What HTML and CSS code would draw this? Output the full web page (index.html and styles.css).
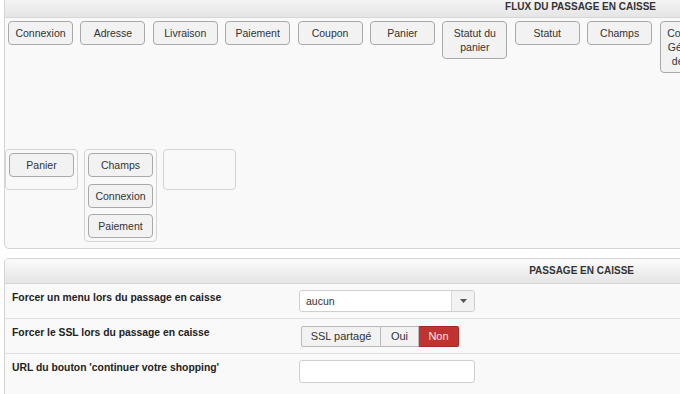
FILE: index.html
```html
<!DOCTYPE html>
<html lang="fr">
<head>
<meta charset="utf-8">
<title>Passage en caisse</title>
<link rel="stylesheet" href="styles.css">
</head>
<body>
<div class="page">
  <section class="panel panel-flow">
    <div class="panel-head head-flow">FLUX DU PASSAGE EN CAISSE</div>
    <div class="steps">
      <div class="btn">Connexion</div>
      <div class="btn">Adresse</div>
      <div class="btn">Livraison</div>
      <div class="btn">Paiement</div>
      <div class="btn">Coupon</div>
      <div class="btn">Panier</div>
      <div class="btn">Statut du panier</div>
      <div class="btn">Statut</div>
      <div class="btn">Champs</div>
      <div class="btn">Conditions Générales de vente</div>
    </div>
    <div class="groups">
      <div class="group"><div class="btn">Panier</div></div>
      <div class="group">
        <div class="btn">Champs</div>
        <div class="btn">Connexion</div>
        <div class="btn">Paiement</div>
      </div>
      <div class="group"></div>
    </div>
  </section>

  <section class="panel panel-form">
    <div class="panel-head head-form">PASSAGE EN CAISSE</div>
    <div class="row">
      <div class="label">Forcer un menu lors du passage en caisse</div>
      <div class="field">
        <div class="select">
          <span class="select-value">aucun</span>
          <span class="select-arrow"><svg width="7" height="4" viewBox="0 0 7 4"><path d="M0 0h7L3.5 4z" fill="#555"/></svg></span>
        </div>
      </div>
    </div>
    <div class="row">
      <div class="label">Forcer le SSL lors du passage en caisse</div>
      <div class="field">
        <div class="toggle">
          <span class="opt">SSL partagé</span>
          <span class="opt">Oui</span>
          <span class="opt opt-active">Non</span>
        </div>
      </div>
    </div>
    <div class="row">
      <div class="label">URL du bouton 'continuer votre shopping'</div>
      <div class="field">
        <div class="input"></div>
      </div>
    </div>
  </section>
</div>
</body>
</html>
```
FILE: styles.css
```css
html, body {
  margin: 0;
  padding: 0;
  background: #ffffff;
  overflow: hidden;
  width: 680px;
  height: 394px;
}
body {
  font-family: "Liberation Sans", Arial, sans-serif;
  font-size: 11px;
  color: #333;
}
.page {
  width: 760px;
  padding-left: 4px;
}
.panel {
  width: 740px;
  background: #f9f9f9;
  border: 1px solid #d4d4d4;
  border-radius: 5px;
  box-sizing: border-box;
}
.panel-flow {
  margin-top: -9px;
  border-top-left-radius: 0;
  border-top-right-radius: 0;
}
.panel-form {
  margin-top: 9px;
}
.panel-head {
  background: linear-gradient(#fbfbfb, #e5e5e5);
  border-bottom: 1px solid #d6d6d6;
  font-weight: bold;
  font-size: 10px;
  text-align: right;
  color: #333;
  box-sizing: border-box;
}
.head-flow {
  height: 26px;
  padding-top: 8px;
  line-height: 14px;
  padding-right: 87px;
  border-radius: 0;
}
.head-form {
  height: 25px;
  line-height: 24px;
  padding-right: 109px;
  border-radius: 4px 4px 0 0;
}
.steps {
  display: flex;
  align-items: flex-start;
  gap: 7.4px;
  padding: 3px 3px 0 3px;
  height: 128px;
}
.btn {
  width: 65px;
  flex: none;
  box-sizing: border-box;
  border: 1px solid #a9a9a9;
  border-radius: 4px;
  background: #f2f2f2;
  text-align: center;
  padding: 4px 2px;
  line-height: 14px;
  font-size: 10.5px;
  color: #333;
}
.groups {
  display: flex;
  align-items: flex-start;
  gap: 6px;
  padding: 0 0 6px 0;
}
.group {
  width: 73px;
  min-height: 41px;
  box-sizing: border-box;
  border: 1px solid #d4d4d4;
  border-radius: 4px;
  padding: 3px 3px 0 3px;
  display: flex;
  flex-direction: column;
  gap: 6.5px;
}
.group .btn:last-child {
  margin-bottom: 3px;
}
.row {
  display: flex;
  align-items: flex-start;
  height: 35px;
  box-sizing: border-box;
  border-bottom: 1px solid #e2e2e2;
}
.row:last-child {
  border-bottom: none;
  height: 45px;
}
.label {
  width: 287px;
  padding-left: 7px;
  padding-top: 8px;
  font-weight: bold;
  font-size: 10.35px;
  color: #222;
}
.field {
  padding-top: 6px;
}
.select {
  display: flex;
  width: 176px;
  height: 22px;
  box-sizing: border-box;
  border: 1px solid #cfcfcf;
  border-radius: 3px;
  background: #fff;
}
.select-value {
  flex: 1;
  padding-left: 6px;
  line-height: 20px;
  font-size: 10.5px;
  color: #333;
}
.select-arrow {
  width: 22px;
  border-left: 1px solid #d8d8d8;
  background: #f2f2f2;
  display: flex;
  align-items: center;
  justify-content: center;
  border-radius: 0 2px 2px 0;
}
.toggle {
  display: flex;
  margin-left: 2px;
  margin-top: 1px;
  height: 21px;
}
.opt {
  box-sizing: border-box;
  border: 1px solid #b8b8b8;
  border-left: none;
  background: #f2f2f2;
  line-height: 19px;
  padding: 0 10px;
  font-size: 11px;
  color: #333;
}
.opt:first-child {
  border-left: 1px solid #b8b8b8;
  border-radius: 2px 0 0 2px;
  width: 80px;
  text-align: center;
  padding: 0;
}
.opt:nth-child(2) {
  width: 38px;
  text-align: center;
  padding: 0;
}
.opt-active {
  width: 40px;
  padding: 0;
  text-align: center;
  background: #bf3430;
  border-color: #a52a26;
  color: #fbe9e9;
  border-radius: 0 2px 2px 0;
}
.input {
  width: 176px;
  height: 23px;
  box-sizing: border-box;
  border: 1px solid #cfcfcf;
  border-radius: 3px;
  background: #fff;
}
```
